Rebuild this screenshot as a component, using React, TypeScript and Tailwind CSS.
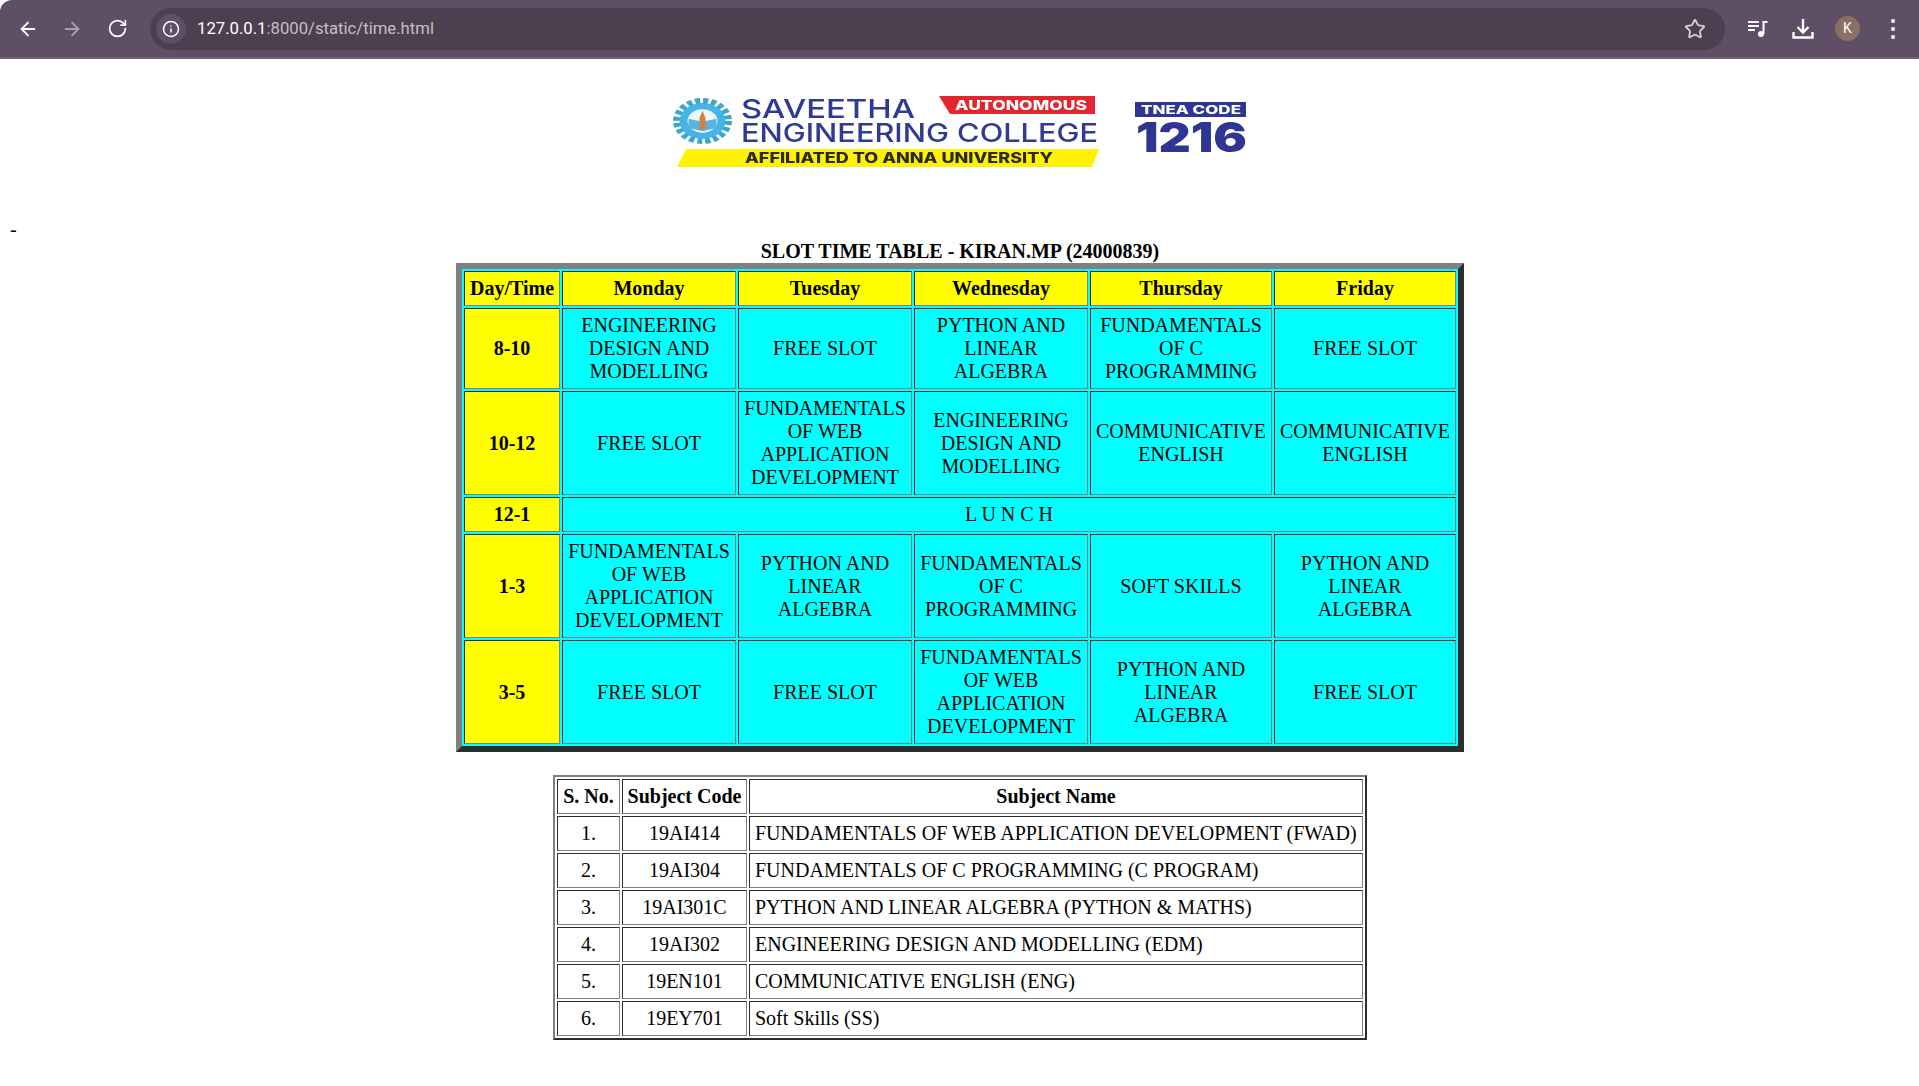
import { ArrowLeft, ArrowRight, RotateCw, Star, Info } from "lucide-react";

const slotRows = [
  { time: "8-10", cells: ["ENGINEERING DESIGN AND MODELLING", "FREE SLOT", "PYTHON AND LINEAR ALGEBRA", "FUNDAMENTALS OF C PROGRAMMING", "FREE SLOT"] },
  { time: "10-12", cells: ["FREE SLOT", "FUNDAMENTALS OF WEB APPLICATION DEVELOPMENT", "ENGINEERING DESIGN AND MODELLING", "COMMUNICATIVE ENGLISH", "COMMUNICATIVE ENGLISH"] },
  { time: "12-1", cells: [] },
  { time: "1-3", cells: ["FUNDAMENTALS OF WEB APPLICATION DEVELOPMENT", "PYTHON AND LINEAR ALGEBRA", "FUNDAMENTALS OF C PROGRAMMING", "SOFT SKILLS", "PYTHON AND LINEAR ALGEBRA"] },
  { time: "3-5", cells: ["FREE SLOT", "FREE SLOT", "FUNDAMENTALS OF WEB APPLICATION DEVELOPMENT", "PYTHON AND LINEAR ALGEBRA", "FREE SLOT"] },
];

const days = [
  { name: "Day/Time", width: "w-[96px]" },
  { name: "Monday", width: "w-[174px]" },
  { name: "Tuesday", width: "w-[174px]" },
  { name: "Wednesday", width: "w-[174px]" },
  { name: "Thursday", width: "w-[182px]" },
  { name: "Friday", width: "w-[182px]" },
];

const subjectHeads = [
  { name: "S. No.", width: "w-[63px]" },
  { name: "Subject Code", width: "w-[125px]" },
  { name: "Subject Name", width: "w-[614px]" },
];

const subjects = [
  ["1.", "19AI414", "FUNDAMENTALS OF WEB APPLICATION DEVELOPMENT (FWAD)"],
  ["2.", "19AI304", "FUNDAMENTALS OF C PROGRAMMING (C PROGRAM)"],
  ["3.", "19AI301C", "PYTHON AND LINEAR ALGEBRA (PYTHON & MATHS)"],
  ["4.", "19AI302", "ENGINEERING DESIGN AND MODELLING (EDM)"],
  ["5.", "19EN101", "COMMUNICATIVE ENGLISH (ENG)"],
  ["6.", "19EY701", "Soft Skills (SS)"],
];

const cell = "border border-t-[#2d2d2d] border-l-[#2d2d2d] border-r-[#808080] border-b-[#808080] py-[5px] text-center";

function Toolbar() {
  return (
    <div className="h-[59px] bg-[#5f4f66] border-b-[2px] border-[#6f6076] flex items-center pl-[17px] pr-[24px] rounded-tl-[12px] font-['Roboto',sans-serif]">
      <ArrowLeft size={22} className="text-white" strokeWidth={2} />
      <ArrowRight size={22} className="text-[#a79dac] ml-[22px]" strokeWidth={2} />
      <RotateCw size={21} className="text-white ml-[24px]" strokeWidth={2} />
      <div className="ml-[22px] flex-1 h-[42px] rounded-full bg-[#4c3f50] flex items-center pl-[6px] pr-[19px]">
        <div className="w-[30px] h-[30px] rounded-full bg-[#5f4f66] flex items-center justify-center">
          <Info size={18} className="text-white" strokeWidth={2} />
        </div>
        <div className="ml-[11px] text-[16.700px] text-[#c4bec7]">
          <span className="text-white">127.0.0.1</span>:8000/static/time.html
        </div>
        <Star size={22} className="text-[#d5d0d8] ml-auto" strokeWidth={2} />
      </div>
      <div className="flex items-center">
        <svg width="20" height="20" viewBox="0 0 20 20" className="ml-[23px] text-white" fill="currentColor">
          <rect x="0" y="2" width="11" height="2" />
          <rect x="0" y="6" width="11" height="2" />
          <rect x="0" y="10" width="7" height="2" />
          <circle cx="13" cy="15" r="3" />
          <rect x="14.500" y="2" width="2" height="13" />
          <rect x="14.500" y="2" width="5" height="2" />
        </svg>
        <svg width="22" height="22" viewBox="0 0 22 22" className="ml-[24px] text-white" fill="none" stroke="currentColor" strokeWidth="2.400">
          <path d="M11 1v13M5.500 9l5.500 5.500L16.500 9" />
          <path d="M1.500 14v5.500h19V14" />
        </svg>
        <div className="ml-[21px] w-[25px] h-[25px] rounded-full bg-[#8d6e63] text-white text-[14px] flex items-center justify-center">K</div>
        <div className="ml-[31px] flex flex-col gap-[4px]">
          <span className="block w-[4px] h-[4px] rounded-full bg-white" />
          <span className="block w-[4px] h-[4px] rounded-full bg-white" />
          <span className="block w-[4px] h-[4px] rounded-full bg-white" />
        </div>
      </div>
    </div>
  );
}

function Logo() {
  const sans = "Inter, Lato, sans-serif";
  return (
    <svg width="590" height="80" viewBox="665 92 590 80" className="block blur-[0.5px]">
      <g transform="translate(702.500 121) scale(1 0.78)">
        <circle r="25.500" fill="none" stroke="#3aa6c8" strokeWidth="8" strokeDasharray="5 3" />
        <circle r="23" fill="#45b4e6" />
        <circle r="15" fill="#eef8fc" />
        <path d="M-14 -3l14 4 14-4v12l-14 4-14-4z" fill="#58b4e0" />
        <path d="M0 -13l3 9v15h-6v-15z" fill="#d8803a" />
      </g>
      <text x="741" y="118" fontFamily={sans} fontSize="26" fontWeight="500" fill="#2e3a94" textLength="174" lengthAdjust="spacingAndGlyphs">SAVEETHA</text>
      <text x="741" y="142" fontFamily={sans} fontSize="25" fontWeight="500" fill="#2e3a94" textLength="357" lengthAdjust="spacingAndGlyphs">ENGINEERING COLLEGE</text>
      <polygon points="939,96 1095,96 1095,114 950,114" fill="#e2262f" />
      <text x="955" y="109.500" fontFamily={sans} fontSize="13" fontWeight="800" fill="#ffffff" textLength="132" lengthAdjust="spacingAndGlyphs">AUTONOMOUS</text>
      <polygon points="686,149 1099,149 1092,167 677,167" fill="#fff200" />
      <text x="745" y="163" fontFamily={sans} fontSize="14" fontWeight="800" fill="#2a2a1a" textLength="308" lengthAdjust="spacingAndGlyphs">AFFILIATED TO ANNA UNIVERSITY</text>
      <rect x="1135" y="102" width="111" height="15" fill="#2e3592" />
      <text x="1141" y="113.500" fontFamily={sans} fontSize="11.500" fontWeight="800" fill="#ffffff" textLength="100" lengthAdjust="spacingAndGlyphs">TNEA CODE</text>
      <text x="1136" y="151.500" fontFamily={sans} fontSize="41" fontWeight="900" fill="#2e3592" textLength="111" lengthAdjust="spacingAndGlyphs">1216</text>
    </svg>
  );
}

export default function App() {
  return (
    <div className="min-h-[1086px] bg-white text-black font-['Liberation_Serif',serif] text-[20px] leading-[23px]">
      <Toolbar />
      <div className="flex justify-center pt-[33px]">
        <Logo />
      </div>
      <div className="mt-[46px] pl-[10px] h-[23px]">-</div>
      <div className="text-center font-bold mt-[-1px] pl-[1px]">SLOT TIME TABLE - KIRAN.MP (24000839)</div>
      <table className="ml-[456px] w-[1008px] table-fixed border-separate border-spacing-[2px] bg-[#00ffff] border-[6px] border-t-[#808080] border-l-[#808080] border-r-[#2d2d2d] border-b-[#2d2d2d]">
        <tbody>
          <tr>
            {days.map((d) => (
              <th key={d.name} className={`${cell} ${d.width} px-[4px] bg-[#ffff00] font-bold`}>{d.name}</th>
            ))}
          </tr>
          {slotRows.map((r) => (
            <tr key={r.time}>
              <th className={`${cell} px-[5px] bg-[#ffff00] font-bold`}>{r.time}</th>
              {r.cells.length === 0 ? (
                <td colSpan={5} className={`${cell} px-[5px]`}>L U N C H</td>
              ) : (
                r.cells.map((c, i) => (
                  <td key={i} className={`${cell} px-[5px]`}>{c}</td>
                ))
              )}
            </tr>
          ))}
        </tbody>
      </table>
      <table className="ml-[553px] mt-[23px] w-[814px] table-fixed border-separate border-spacing-[2px] border-[2px] border-t-[#808080] border-l-[#808080] border-r-[#2d2d2d] border-b-[#2d2d2d]">
        <tbody>
          <tr>
            {subjectHeads.map((h) => (
              <th key={h.name} className={`${cell} ${h.width} px-0 whitespace-nowrap font-bold`}>{h.name}</th>
            ))}
          </tr>
          {subjects.map(([n, code, name]) => (
            <tr key={n}>
              <td className={`${cell} px-[5px]`}>{n}</td>
              <td className={`${cell} px-[5px]`}>{code}</td>
              <td className={`${cell} px-[5px] text-left`}>{name}</td>
            </tr>
          ))}
        </tbody>
      </table>
    </div>
  );
}
